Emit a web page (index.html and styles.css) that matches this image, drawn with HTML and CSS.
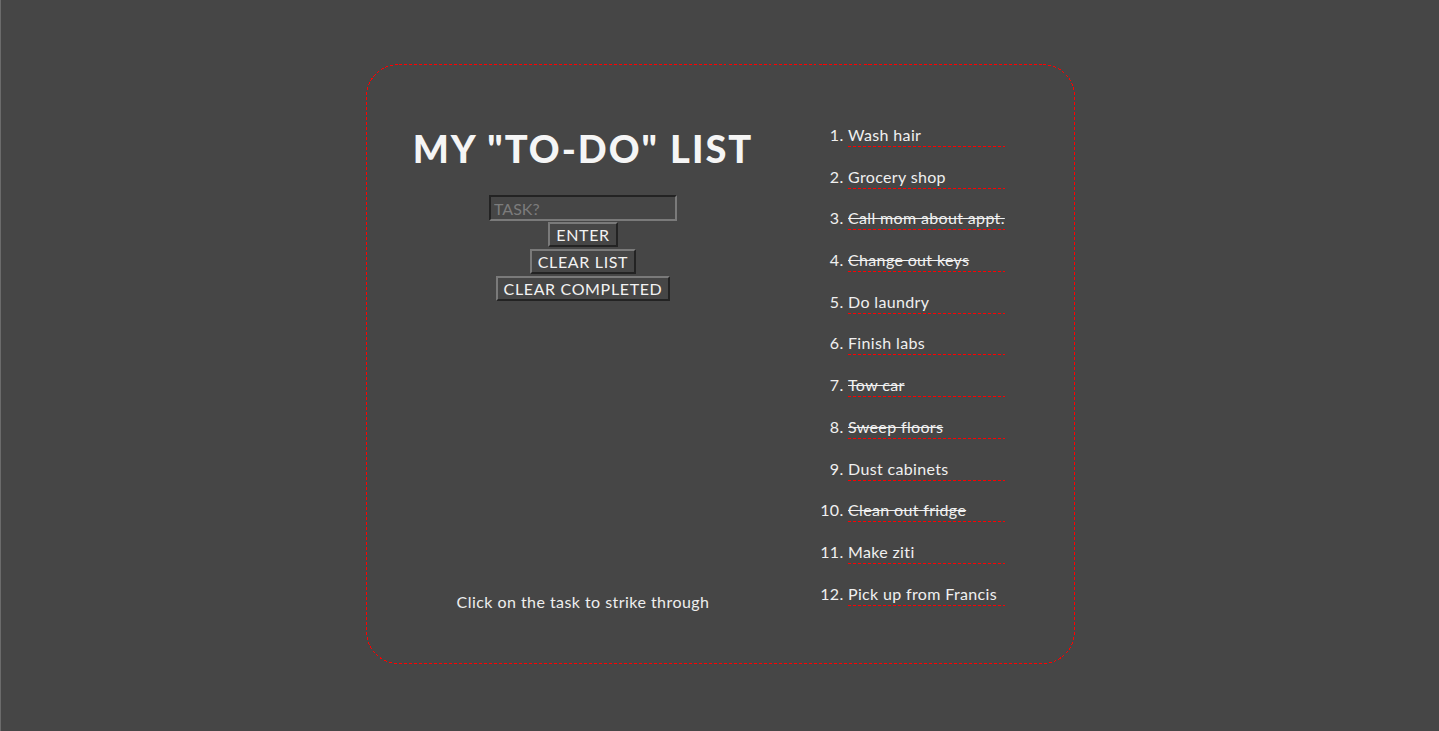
FILE: index.html
```html
<!DOCTYPE html>
<html lang="en">
<head>
<meta charset="utf-8">
<title>My To-Do List</title>
<link rel="stylesheet" href="styles.css">
</head>
<body>
<main class="card">
  <svg class="card-frame" width="709" height="600" viewBox="0 0 709 600" aria-hidden="true" shape-rendering="crispEdges">
    <rect x="0.5" y="0.5" width="708" height="599" rx="32" ry="32" fill="none" stroke="#ff0000" stroke-width="1" stroke-dasharray="3 2"/>
  </svg>
  <section class="left">
    <h1 class="title">MY "TO-DO" LIST</h1>
    <form class="controls">
      <input class="task-input" type="text" placeholder="TASK?">
      <button class="btn" type="button">ENTER</button>
      <button class="btn" type="button">CLEAR LIST</button>
      <button class="btn" type="button">CLEAR COMPLETED</button>
    </form>
    <p class="hint">Click on the task to strike through</p>
  </section>
  <section class="right">
    <ol class="tasks">
      <li class="task"><span>Wash hair</span></li>
      <li class="task short"><span>Grocery shop</span></li>
      <li class="task done"><span>Call mom about appt.</span></li>
      <li class="task done"><span>Change out keys</span></li>
      <li class="task short"><span>Do laundry</span></li>
      <li class="task"><span>Finish labs</span></li>
      <li class="task done"><span>Tow car</span></li>
      <li class="task done"><span>Sweep floors</span></li>
      <li class="task short"><span>Dust cabinets</span></li>
      <li class="task done"><span>Clean out fridge</span></li>
      <li class="task"><span>Make ziti</span></li>
      <li class="task"><span>Pick up from Francis</span></li>
    </ol>
  </section>
</main>
</body>
</html>
```
FILE: styles.css
```css
html, body {
  margin: 0;
  padding: 0;
}
body {
  background: #464646;
  min-height: 100vh;
  box-shadow: inset 1px 0 0 #6b6b6b;
  font-family: Lato, "Open Sans", sans-serif;
  color: #f0f0f0;
  overflow: hidden;
}
.card {
  position: relative;
  box-sizing: border-box;
  width: 709px;
  height: 600px;
  margin: 64px 0 0 366px;
  display: flex;
}
.card-frame {
  position: absolute;
  left: 0;
  top: 0;
  pointer-events: none;
}
.left {
  width: 434px;
  display: flex;
  flex-direction: column;
  align-items: center;
  padding-top: 61px;
  box-sizing: border-box;
}
.title {
  margin: 0;
  font-size: 38px;
  line-height: 46px;
  font-weight: 900;
  color: #f5f5f5;
  letter-spacing: 2px;
}
.controls {
  margin-top: 24px;
  display: flex;
  flex-direction: column;
  align-items: center;
}
.task-input {
  box-sizing: border-box;
  width: 188px;
  height: 26px;
  margin: 0 0 1px;
  padding: 0 3px;
  background: #464646;
  border: 2px solid;
  border-color: #232323 #7a7a7a #7a7a7a #232323;
  font-family: inherit;
  font-size: 16px;
  color: #eee;
  outline: none;
}
.task-input::placeholder {
  color: #7c7c7c;
}
.btn {
  box-sizing: border-box;
  height: 25px;
  margin: 0 0 2px;
  padding: 0 6px;
  background: #464646;
  border: 2px solid;
  border-color: #7a7a7a #232323 #232323 #7a7a7a;
  font-family: inherit;
  font-size: 16px;
  line-height: 20px;
  letter-spacing: 0.65px;
  color: #f2f2f2;
}
.hint {
  margin: auto 0 0;
  padding-bottom: 51px;
  font-size: 16px;
  line-height: 22px;
  letter-spacing: 0.45px;
  color: #eeeeee;
}
.right {
  flex: 1;
  padding-top: 60px;
}
.tasks {
  margin: 0;
  padding-left: 48px;
}
.task {
  width: 157px;
  height: 23px;
  font-size: 16px;
  line-height: 22px;
  letter-spacing: 0.35px;
  margin-bottom: 19px;
  color: #f0f0f0;
  background: repeating-linear-gradient(to right, #ff0000 0 3px, transparent 3px 5px) left bottom / 100% 1px no-repeat;
}
.task.short {
  margin-bottom: 18px;
}
.task.done span {
  text-decoration: line-through;
}
```
